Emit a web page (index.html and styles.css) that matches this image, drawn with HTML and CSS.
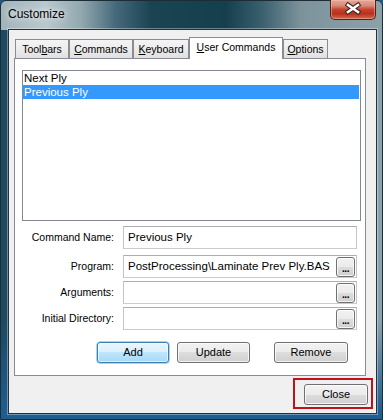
FILE: index.html
```html
<!DOCTYPE html>
<html>
<head>
<meta charset="utf-8">
<title>Customize</title>
<link rel="stylesheet" href="styles.css">
</head>
<body>
<div class="window">
  <div class="titlebar">
    <span class="title">Customize</span>
    <div class="close-x">
      <svg width="46" height="20" viewBox="0 0 46 20">
        <g stroke-linecap="square" fill="none">
          <path d="M18 6 L28 13 M18 13 L28 6" stroke="#3b2420" stroke-width="4.6"/>
          <path d="M18 6 L28 13 M18 13 L28 6" stroke="#ffffff" stroke-width="2.6"/>
        </g>
      </svg>
    </div>
  </div>
  <div class="client">
    <div class="tabs">
      <div class="tab w1">Tool<u>b</u>ars</div>
      <div class="tab w2"><u>C</u>ommands</div>
      <div class="tab w3"><u>K</u>eyboard</div>
      <div class="tab w4 active"><u>U</u>ser Commands</div>
      <div class="tab w5"><u>O</u>ptions</div>
    </div>
    <div class="panel">
      <div class="listbox">
        <div class="item">Next Ply</div>
        <div class="item selected">Previous Ply</div>
      </div>
      <div class="row r1">
        <span class="label">Command Name:</span>
        <div class="field"><span class="val">Previous Ply</span></div>
      </div>
      <div class="row r2">
        <span class="label">Program:</span>
        <div class="field"><span class="val">PostProcessing\Laminate Prev Ply.BAS</span><span class="dots">...</span></div>
      </div>
      <div class="row r3">
        <span class="label">Arguments:</span>
        <div class="field"><span class="val"></span><span class="dots">...</span></div>
      </div>
      <div class="row r4">
        <span class="label">Initial Directory:</span>
        <div class="field"><span class="val"></span><span class="dots">...</span></div>
      </div>
      <div class="buttons">
        <div class="btn default b-add">Add</div>
        <div class="btn b-update">Update</div>
        <div class="btn b-remove">Remove</div>
      </div>
    </div>
    <div class="footer">
      <div class="focus">
        <div class="btn b-close">Close</div>
      </div>
    </div>
  </div>
</div>
</body>
</html>
```

FILE: styles.css
```css
html, body {
  margin: 0;
  padding: 0;
}
body {
  width: 383px;
  height: 420px;
  overflow: hidden;
  font-family: "Liberation Sans", Arial, sans-serif;
  background: #1f5a88;
}
.window {
  box-sizing: border-box;
  width: 383px;
  height: 420px;
  display: flex;
  flex-direction: column;
  border: 1px solid #1d2d36;
  border-radius: 6px 6px 2px 2px;
  background:
    linear-gradient(90deg, #a1b4bb 0px, #b9c8cd 45px, #93a8b0 80px, #45697a 115px, #1b4453 150px, #163f4e 225px, #3b616f 262px, #7d939b 300px, #8da1a9 383px) top left / 100% 29px no-repeat,
    linear-gradient(180deg, rgba(31,92,144,0) 0px, rgba(31,92,144,0) 320px, rgba(31,92,144,1) 412px),
    linear-gradient(90deg, #1c4860 0px, #214c64 8px, #5e7d8d 50%, #8ca1ac 100%);
}
.titlebar {
  height: 28px;
  display: flex;
  justify-content: space-between;
  align-items: flex-start;
  flex: none;
}
.title {
  padding: 5px 0 0 7px;
  font-size: 12px;
  line-height: 16px;
  color: #000;
  text-shadow: 0 0 8px rgba(255,255,255,0.9), 0 0 4px rgba(255,255,255,0.6);
}
.close-x {
  box-sizing: border-box;
  width: 46px;
  height: 20px;
  margin: -1px 6px 0 0;
  border: 1px solid #4e2119;
  border-top: none;
  border-radius: 0 0 5px 5px;
  background: linear-gradient(180deg, #e2a99a 0%, #d88a77 30%, #c5442f 50%, #b8311d 72%, #d06a4e 100%);
  box-shadow: inset 0 0 0 1px rgba(255,200,180,0.45);
}
.close-x svg {
  display: block;
  margin: -1px 0 0 -1px;
}
.client {
  box-sizing: border-box;
  width: 369px;
  height: 385px;
  margin: 0 0 0 7px;
  border: 1px solid #22333d;
  background: #f0f0f0;
  box-shadow: 0 0 0 1px rgba(255,255,255,0.35);
  display: flex;
  flex-direction: column;
}
.tabs {
  display: flex;
  align-items: flex-end;
  height: 21px;
  margin: 7px 0 0 6px;
  position: relative;
  z-index: 1;
}
.tab {
  box-sizing: border-box;
  height: 19px;
  padding-top: 2px;
  border: 1px solid #898c95;
  border-bottom: none;
  background: linear-gradient(180deg, #f4f4f4 0%, #ececec 50%, #e0e0e0 100%);
  font-size: 10.5px;
  line-height: 15px;
  text-align: center;
  color: #000;
  white-space: nowrap;
}
.w1 { width: 54px; }
.w2 { width: 64px; }
.w3 { width: 56px; }
.w4 { width: 94px; }
.w5 { width: 45px; }
.tab.active {
  height: 22px;
  margin-bottom: -1px;
  padding-top: 2px;
  background: #ffffff;
}
.tab u {
  text-decoration: underline;
  text-underline-offset: 1px;
}
.panel {
  box-sizing: border-box;
  width: 352px;
  height: 318px;
  margin-left: 5px;
  border: 1px solid #898c95;
  background: #ffffff;
  flex: none;
}
.listbox {
  box-sizing: border-box;
  width: 339px;
  height: 151px;
  margin: 11px 0 0 7px;
  border: 1px solid #828790;
  background: #fff;
}
.item {
  height: 14px;
  padding: 0 0 0 1px;
  font-size: 11.5px;
  line-height: 15px;
  color: #000;
  white-space: nowrap;
}
.item.selected {
  background: #3399ff;
  color: #fff;
  margin-right: 1px;
}
.row {
  display: flex;
  align-items: center;
  height: 23px;
}
.r1 { margin-top: 5px; }
.r2 { margin-top: 6px; }
.r3 { margin-top: 3px; }
.r4 { margin-top: 3px; }
.label {
  width: 99px;
  text-align: right;
  font-size: 10.5px;
  line-height: 23px;
  color: #000;
  white-space: nowrap;
}
.field {
  box-sizing: border-box;
  width: 234px;
  height: 23px;
  margin-left: 9px;
  border: 1px solid #abadb3;
  border-color: #abadb3 #c2c4ca #c9cbd0 #c2c4ca;
  background: #fff;
  display: flex;
  align-items: flex-end;
}
.val {
  flex: 1;
  align-self: stretch;
  padding-left: 4px;
  font-size: 11.5px;
  line-height: 20px;
  color: #000;
  white-space: nowrap;
  overflow: hidden;
}
.dots {
  box-sizing: border-box;
  width: 19px;
  height: 20px;
  margin-right: 1px;
  border: 1px solid #707070;
  border-radius: 3px;
  background: linear-gradient(180deg, #f2f2f2 0%, #ebebeb 50%, #dddddd 50%, #cfcfcf 100%);
  box-shadow: inset 0 0 0 1px rgba(255,255,255,0.75);
  font-size: 10px;
  line-height: 9px;
  padding-top: 6px;
  text-align: center;
  color: #000;
  letter-spacing: -0.5px;
  font-weight: bold;
}
.buttons {
  display: flex;
  margin: 12px 0 0 82px;
}
.btn {
  box-sizing: border-box;
  height: 21px;
  border: 1px solid #707070;
  border-radius: 3px;
  background: linear-gradient(180deg, #f2f2f2 0%, #ebebeb 50%, #dddddd 50%, #cfcfcf 100%);
  box-shadow: inset 0 0 0 1px rgba(255,255,255,0.75);
  font-size: 11px;
  line-height: 19px;
  text-align: center;
  color: #000;
}
.btn.default {
  border-color: #3c7fb1;
  background: linear-gradient(180deg, #eaf6fd 0%, #d9f0fc 50%, #bee6fd 50%, #a7d9f5 100%);
  box-shadow: inset 0 0 0 1px rgba(255,255,255,0.6), 0 0 0 0.5px #48b0e8;
}
.b-add { width: 72px; }
.b-update { width: 73px; margin-left: 8px; }
.b-remove { width: 74px; margin-left: 24px; }
.footer {
  display: flex;
  justify-content: flex-end;
  padding: 2px 3px 0 0;
}
.focus {
  border: 2px solid #c0101a;
  padding: 4px 3px 2px 9px;
}
.b-close { width: 64px; }
```
